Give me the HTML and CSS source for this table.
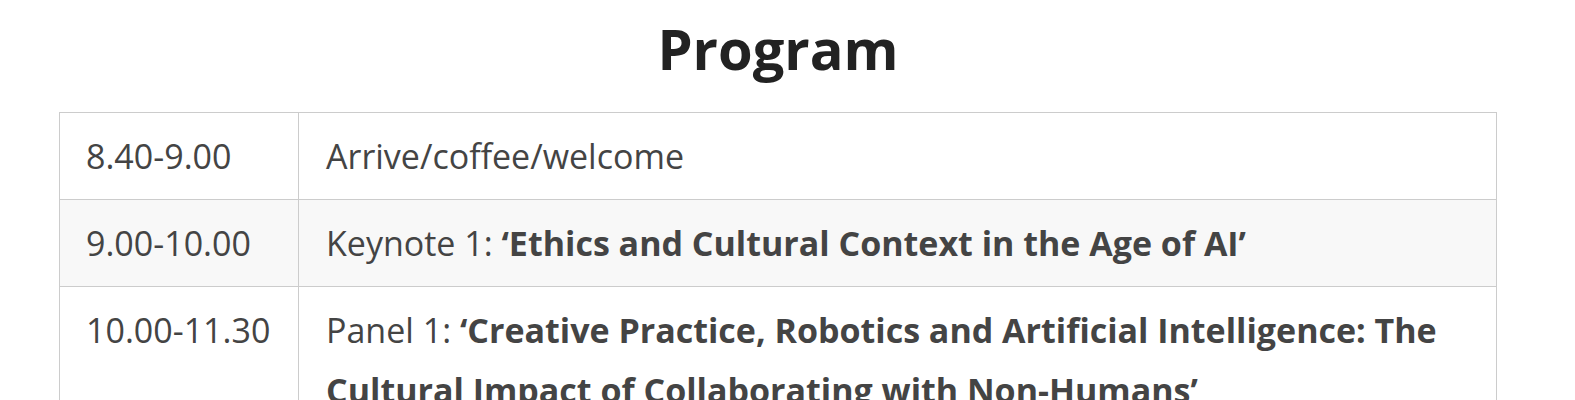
FILE: index.html
```html
<!DOCTYPE html>
<html lang="en">
<head>
<meta charset="utf-8">
<title>Program</title>
<link rel="stylesheet" href="styles.css">
</head>
<body>
<div class="program">
  <h1 class="program-title">Program</h1>
  <table class="schedule">
    <tbody>
      <tr>
        <td class="time">8.40-9.00</td>
        <td class="event">Arrive/coffee/welcome</td>
      </tr>
      <tr class="alt">
        <td class="time">9.00-10.00</td>
        <td class="event">Keynote 1: <strong>‘Ethics and Cultural Context in the Age of AI’</strong></td>
      </tr>
      <tr>
        <td class="time">10.00-11.30</td>
        <td class="event">Panel 1: <strong>‘Creative Practice, Robotics and Artificial Intelligence: The Cultural Impact of Collaborating with Non-Humans’</strong></td>
      </tr>
    </tbody>
  </table>
</div>
</body>
</html>
```
FILE: styles.css
```css
html, body {
  margin: 0;
  padding: 0;
  background: #fff;
}
body {
  font-family: "Open Sans", "Noto Sans", sans-serif;
  color: #444;
}
.program {
  margin-left: 59px;
  width: 1438px;
}
.program-title {
  margin: 0;
  padding-top: 16px;
  height: 112px;
  box-sizing: border-box;
  text-align: center;
  font-size: 56px;
  line-height: 64px;
  font-weight: 700;
  color: #222;
}
.schedule {
  width: 100%;
  border-collapse: collapse;
  font-size: 34px;
  line-height: 60px;
}
.schedule td {
  border: 1px solid #ccc;
  padding: 13px 26px;
  vertical-align: top;
}
.schedule .event {
  padding-left: 27px;
}
.schedule .time {
  width: 186px;
  white-space: nowrap;
}
.schedule .alt td {
  background: #f8f8f8;
}
.schedule strong {
  font-weight: 700;
}
```
